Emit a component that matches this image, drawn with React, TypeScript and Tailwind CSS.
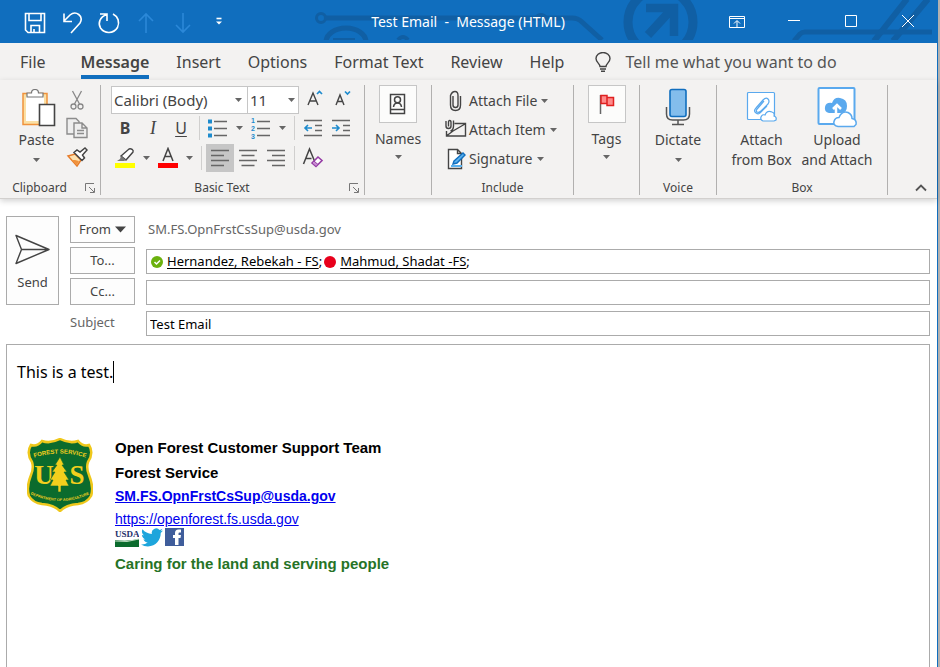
import React from "react";
import type { ReactNode } from "react";

const INK = "#444444";
const BLUE = "#1e8bcd";

function Caret({ className = "" }: { className?: string }) {
  return (
    <svg width="7" height="4" viewBox="0 0 7 4" className={"shrink-0 " + className} aria-hidden="true">
      <path d="M0 0h7L3.5 4z" fill="#666" />
    </svg>
  );
}

function TitleArt() {
  return (
    <svg className="absolute right-0 top-0" width="640" height="40" viewBox="297 0 640 40" fill="none" stroke="#105fa4" aria-hidden="true">
      <circle cx="321" cy="18" r="4.500" strokeWidth="3" />
      <path d="M326 18h246q6 0 10 4l20 18" strokeWidth="5" />
      <path d="M535 18q6-7 12 0" strokeWidth="3" />
      <path d="M326 42a20 14 0 0 1 40 0" strokeWidth="5" />
      <path d="M333 39.500h22" strokeWidth="3" />
      <path d="M398 40q5-6 10 0" strokeWidth="4" />
      <circle cx="660.500" cy="22" r="32.500" strokeWidth="9" />
      <path d="M646 8h28v28M671 10l-23 25" strokeWidth="8.500" />
      <path d="M794 41l6-7q2-2 5-2h127" strokeWidth="5" />
      <path d="M874 41l33-42M893 41l35-42" strokeWidth="6" />
    </svg>
  );
}

function QuickButton({ label, children }: { label: string; children: ReactNode }) {
  return (
    <button aria-label={label} className="flex h-full w-[37px] items-center justify-center">
      <svg width="24" height="24" viewBox="0 0 24 24" fill="none" stroke="white" strokeWidth="1.6">{children}</svg>
    </button>
  );
}

function WindowButton({ label, children }: { label: string; children: ReactNode }) {
  return (
    <button aria-label={label} className="flex h-full w-[57px] items-center justify-center">
      <svg width="16" height="16" viewBox="0 0 16 16" fill="none" stroke="white" strokeWidth="1">{children}</svg>
    </button>
  );
}

function TitleBar() {
  return (
    <header className="relative flex h-[43px] items-center justify-between bg-[#106ebe]">
      <TitleArt />
      <div className="relative h-full flex-1">
        <div className="flex h-full items-center pl-4 pt-0.5">
          <QuickButton label="Save">
            <path d="M2.500 2.500h19v19H5l-2.500-2.500zM6 2.500v7h12v-7M8 21.500v-7h8.500v7M11 21v-3" />
          </QuickButton>
          <QuickButton label="Undo">
            <path d="M4 2.500v8h8M4 10l6-6c6-5 14 1 10 8l-9 10" />
          </QuickButton>
          <QuickButton label="Redo">
            <path d="M3 3h7v7M9.500 3.500C3 6 .500 12 3.500 17c4 6 13 6 17-.500C23 11 21 5.500 16 3" />
          </QuickButton>
          <QuickButton label="Previous item">
            <path d="M12 22V3M5 10l7-7 7 7" stroke="#2b88d8" />
          </QuickButton>
          <QuickButton label="Next item">
            <path d="M12 2v19M5 14l7 7 7-7" stroke="#2b88d8" />
          </QuickButton>
          <QuickButton label="Customize quick access toolbar">
            <path d="M8.500 7.500h5" />
            <path d="M8 10.500h6l-3 3z" fill="white" stroke="none" />
          </QuickButton>
        </div>
      </div>
      <h1 className="relative whitespace-pre text-[14px] text-white">Test Email  -  Message (HTML)</h1>
      <div className="relative flex h-full flex-1 items-center justify-end pr-px">
        <WindowButton label="Ribbon display options">
          <path d="M.500 2.500h15v11H.500zM.500 4.500h15M8 13V7M5 9.500L8 6.500l3 3" />
        </WindowButton>
        <WindowButton label="Minimize"><path d="M2 6.500h12" /></WindowButton>
        <WindowButton label="Maximize"><path d="M2.500 1.500h11v11h-11z" /></WindowButton>
        <WindowButton label="Close"><path d="M2 1l12 12M14 1L2 13" /></WindowButton>
      </div>
    </header>
  );
}

function Tabs() {
  const tabs = ["Insert", "Options", "Format Text", "Review", "Help"];
  return (
    <nav className="flex h-[37px] items-start gap-[27px] pl-5 text-[16px] leading-[38px] text-[#444]">
      <button className="mr-2">File</button>
      <button className="h-9 border-b-4 border-[#106ebe] font-semibold leading-[38px]">Message</button>
      {tabs.map((t) => (
        <button key={t} className="whitespace-nowrap">{t}</button>
      ))}
      <label className="flex flex-1 items-center gap-3.5 pl-1">
        <svg width="16" height="20" viewBox="0 0 16 20" fill="none" stroke={INK} strokeWidth="1.400" className="shrink-0">
          <path d="M5 14.500c0-3-4-4-4-8a7 6 0 0 1 14 0c0 4-4 5-4 8zM5 17h6M6 19.300h4" />
        </svg>
        <input aria-label="Tell me what you want to do" placeholder="Tell me what you want to do" className="min-w-0 flex-1 bg-transparent outline-none placeholder:text-[#555]" />
      </label>
    </nav>
  );
}

function Group({ label, launcher, className, children }: { label?: string; launcher?: boolean; className: string; children: ReactNode }) {
  return (
    <section className={"flex h-[110px] shrink-0 flex-col border-r border-[#b1b0af] " + className}>
      <div className="flex-1">{children}</div>
      <div className="flex h-3.5 items-center text-[12px] leading-[14px] text-[#444]">
        <span className={launcher ? "flex-1 pr-1.5 text-center" : "flex-1 text-center"}>{label}</span>
        {launcher && (
          <button aria-label={label + " settings"} className="mr-1">
            <svg width="11" height="11" viewBox="0 0 11 11" fill="none" stroke="#777"><path d="M.500 8V.500H9M4 4l5 5M9.500 5v4.500H5" /></svg>
          </button>
        )}
      </div>
    </section>
  );
}

function Tool({ label, active, children }: { label: string; active?: boolean; children: ReactNode }) {
  return (
    <button aria-label={label} className={active ? "flex h-7 w-7 items-center justify-center bg-[#c6c6c6]" : "flex h-7 w-7 items-center justify-center"}>
      {children}
    </button>
  );
}

function Drop({ label }: { label: string }) {
  return (
    <button aria-label={label} className="flex h-7 w-[15px] items-center justify-center"><Caret /></button>
  );
}

function Lines({ d, children }: { d: string; children?: ReactNode }) {
  return (
    <svg width="20" height="20" viewBox="0 0 20 20" fill="none" className="overflow-visible">
      <path d={d} stroke="#666" strokeWidth="1.500" />
      {children}
    </svg>
  );
}

function Divider() {
  return <div className="mx-1 h-6 w-px bg-[#d0cfce]" />;
}

function ClipboardGroup() {
  return (
    <Group label="Clipboard" launcher className="w-[101px]">
      <div className="flex">
        <button className="flex w-[63px] flex-col items-center pl-2.5 pt-1">
          <svg width="36" height="40" viewBox="0 0 36 40" className="ml-1">
            <path d="M2 4.500h24v31H2z" fill="#fbe0a5" stroke="#f0923c" strokeWidth="1.500" />
            <path d="M5 7h18v25H5z" fill="#fff" />
            <path d="M6 8V4h4.500a3.500 3.500 0 0 1 7 0H22v4z" fill="#fff" stroke="#777" strokeWidth="1.200" />
            <path d="M18.500 15.500h15v21h-15z" fill="#fff" stroke="#444" strokeWidth="1.600" />
          </svg>
          <span className="mt-px text-[14px] leading-5">Paste</span>
          <Caret className="mt-2" />
        </button>
        <div className="flex flex-col pt-px">
          <Tool label="Cut">
            <svg width="14" height="22" viewBox="0 0 14 22" fill="none" stroke="#888" strokeWidth="1.300">
              <path d="M2.500 2l7 13M11.500 2l-7 13" /><circle cx="3.500" cy="17.500" r="2.500" /><circle cx="10.500" cy="17.500" r="2.500" />
            </svg>
          </Tool>
          <Tool label="Copy">
            <svg width="22" height="22" viewBox="0 0 22 22" fill="#eee" stroke="#8c8c8c" strokeWidth="1.400">
              <path d="M1 1.500h9l3 3V17H1z" />
              <path d="M8 6h8l5 5v9.500H8zM16 6v5h5M11 13.500h7M11 16.500h7" />
            </svg>
          </Tool>
          <Tool label="Format Painter">
            <svg width="22" height="22" viewBox="0 0 22 22" fill="none">
              <path d="M2 11l7-2 6 6-4 6z" fill="#fde2b0" stroke="#e77d2b" strokeWidth="1.500" />
              <path d="M5 15l6 5 2-4-4-1z" fill="#f0923c" />
              <path d="M8 7.500l8 8 2.500-2.500-2-3L21 5l-2-2-5 4-3-2z" fill="#fff" stroke={INK} strokeWidth="1.500" />
            </svg>
          </Tool>
        </div>
      </div>
    </Group>
  );
}

function BasicTextGroup() {
  return (
    <Group label="Basic Text" launcher className="w-[264px]">
      <div className="pl-2.5 pt-px">
        <div className="flex h-7 items-center">
          <div className="relative">
            <select aria-label="Font" className="block h-7 w-[137px] appearance-none border border-[#c6c6c6] bg-white pl-0.5 text-[15px] text-[#444]"><option>Calibri (Body)</option></select>
            <Caret className="pointer-events-none absolute right-1.5 top-3" />
          </div>
          <div className="relative -ml-px">
            <select aria-label="Font size" className="block h-7 w-[52px] appearance-none border border-[#c6c6c6] bg-white pl-0.5 text-[15px] text-[#444]"><option>11</option></select>
            <Caret className="pointer-events-none absolute right-1 top-3" />
          </div>
          <Tool label="Increase font size">
            <svg width="20" height="20" viewBox="0 0 20 20" fill="none"><path d="M5 15L10 3l5 12M7 11h6.500" stroke={INK} strokeWidth="1.400" /><path d="M14 4l2.500-2.500L19 4" stroke={BLUE} strokeWidth="1.700" /></svg>
          </Tool>
          <Tool label="Decrease font size">
            <svg width="20" height="20" viewBox="0 0 20 20" fill="none"><path d="M5 15L9 5l4 10M6.500 11.500h5" stroke={INK} strokeWidth="1.400" /><path d="M14 1.500L16.500 4 19 1.500" stroke={BLUE} strokeWidth="1.700" /></svg>
          </Tool>
        </div>
        <div className="flex h-7 items-center">
          <Tool label="Bold"><span className="text-[16px] font-bold">B</span></Tool>
          <Tool label="Italic"><span className="font-[Liberation_Serif,serif] text-[18px] italic">I</span></Tool>
          <Tool label="Underline"><span className="text-[16px] underline underline-offset-2">U</span></Tool>
          <Divider />
          <Tool label="Bullets">
            <Lines d="M6 3.500h13M6 10.500h13M6 17.500h13"><path d="M0 1.500h4v4H0zM0 8.500h4v4H0zM0 15.500h4v4H0z" fill={BLUE} /></Lines>
          </Tool>
          <Drop label="Bullet styles" />
          <Tool label="Numbering">
            <Lines d="M6 3.500h13M6 10.500h13M6 17.500h13">
              <g fill={BLUE} fontSize="7" fontWeight="700" fontFamily="Liberation Sans, sans-serif"><text x="0" y="5">1</text><text x="0" y="13">2</text><text x="0" y="21">3</text></g>
            </Lines>
          </Tool>
          <Drop label="Numbering styles" />
          <Divider />
          <Tool label="Decrease indent"><Lines d="M1 2.500h18M12 7.500h7M12 12.500h7M1 17.500h18"><path d="M9 10H2M5 7l-3 3 3 3" stroke={BLUE} strokeWidth="1.600" /></Lines></Tool>
          <Tool label="Increase indent"><Lines d="M1 2.500h18M12 7.500h7M12 12.500h7M1 17.500h18"><path d="M1 10h7M5 7l3 3-3 3" stroke={BLUE} strokeWidth="1.600" /></Lines></Tool>
        </div>
        <div className="mt-0.5 flex h-7 items-center">
          <Tool label="Highlight">
            <svg width="20" height="22" viewBox="0 0 20 22" fill="none"><path d="M0 16h20v5H0z" fill="#ff0" /><path d="M6 9l8-7c2-1 5 1 4 3l-7 8z" fill="#fff" stroke={INK} strokeWidth="1.400" /><path d="M6 9l5 4-2 1H2l3-2z" fill="#777" /></svg>
          </Tool>
          <Drop label="Highlight colors" />
          <Tool label="Font color">
            <svg width="20" height="22" viewBox="0 0 20 22" fill="none"><path d="M0 16h20v5H0z" fill="#f00" /><path d="M5 14L10 1.500 15 14M6.500 9.500h7" stroke={INK} strokeWidth="1.500" /></svg>
          </Tool>
          <Drop label="Font colors" />
          <Divider />
          <Tool label="Align left" active><Lines d="M1 2.500h18M1 7.500h13M1 12.500h18M1 17.500h13" /></Tool>
          <Tool label="Center"><Lines d="M1 2.500h18M3.500 7.500h13M1 12.500h18M3.500 17.500h13" /></Tool>
          <Tool label="Align right"><Lines d="M1 2.500h18M6 7.500h13M1 12.500h18M6 17.500h13" /></Tool>
          <Divider />
          <Tool label="Clear formatting">
            <svg width="22" height="22" viewBox="0 0 22 22" fill="none"><path d="M1.500 17L7.500 2l5 12M3.500 11.500h6" stroke={INK} strokeWidth="1.500" /><path d="M10 16l6-6 4 3.500-6 6z" fill="#fff" stroke="#953da5" strokeWidth="1.600" /><path d="M10 16l2-2 4 3.500-2 2z" fill="#c98fd3" stroke="#953da5" /></svg>
          </Tool>
        </div>
      </div>
    </Group>
  );
}

function BoxedButton({ label, children }: { label: string; children: ReactNode }) {
  return (
    <button className="flex w-full flex-col items-center">
      <span className="flex h-[38px] w-[38px] items-center justify-center border border-[#c6c6c6] bg-[#fcfcfb]">{children}</span>
      <span className="mt-1 text-[14px] leading-6">{label}</span>
      <Caret className="mt-1" />
    </button>
  );
}

function IncludeButton({ label, children }: { label: string; children: ReactNode }) {
  return (
    <button className="flex h-[29px] items-center gap-0.5 whitespace-nowrap text-[14px]">
      <svg width="22" height="22" viewBox="0 0 22 22" fill="none" stroke={INK} strokeWidth="1.400">{children}</svg>
      {label}
      <Caret className="ml-0.5" />
    </button>
  );
}

function TallButton({ icon, children, className = "" }: { icon: ReactNode; children: ReactNode; className?: string }) {
  return (
    <button className={"flex flex-col items-center text-[14px] leading-5 " + className}>
      <span className="flex h-11 items-center">{icon}</span>
      {children}
    </button>
  );
}

function Ribbon() {
  return (
    <div className="flex h-[119px] border-b border-[#d2d0ce] pt-[5px] text-[#444] shadow-[0_2px_6px_rgba(0,0,0,0.18)]">
      <ClipboardGroup />
      <BasicTextGroup />
      <Group className="w-[67px]">
        <BoxedButton label="Names">
          <svg width="18" height="22" viewBox="0 0 18 22" fill="none" stroke={INK} strokeWidth="1.500">
            <path d="M1.500 1.500h14v19h-14zM1.500 16.500h14M4.500 14q.500-4 4-4t4 4" /><circle cx="8.500" cy="6.800" r="3" />
          </svg>
        </BoxedButton>
      </Group>
      <Group label="Include" className="w-[142px]">
        <div className="pl-[13px] pt-px">
          <IncludeButton label="Attach File">
            <path d="M8 6v9q0 2.500 2.500 2.500T13 15V5.500q0-4-3-4t-4.500 4V15q0 5.500 5 5.500t5-5.500V6" />
          </IncludeButton>
          <IncludeButton label="Attach Item">
            <path d="M9.500 4.500H20.500V17H1.500v-5M2 16.500l6-4.500 12-7M1 2v5q0 2.500 2.500 2.500T6 7V3.500Q6 1.500 4.700 1.500T3.500 3.500v4M8.500 1.500V7q0 4-3 5" />
          </IncludeButton>
          <IncludeButton label="Signature">
            <path d="M3.500 1.500h9l4 4v15h-13zM12.500 1.500v4h4" fill="#fff" />
            <path d="M6 18h11" stroke="#5ab1ef" strokeWidth="2" />
            <path d="M9 13l9-8 2 2-8 8-4 1z" fill="#5ab1ef" stroke="#106ebe" />
          </IncludeButton>
        </div>
      </Group>
      <Group className="w-[66px]">
        <BoxedButton label="Tags">
          <svg width="18" height="22" viewBox="0 0 18 22" fill="none"><path d="M2.500 2v19" stroke="#666" strokeWidth="1.500" /><path d="M3 2.500h6v8H3zM9 4.500h6.500v8H9z" fill="#ff8a8a" stroke="#e02020" strokeWidth="1.500" /></svg>
        </BoxedButton>
      </Group>
      <Group label="Voice" className="w-[77px]">
        <TallButton
          className="w-full"
          icon={
            <svg width="26" height="38" viewBox="0 0 26 38" fill="none"><path d="M1.500 19v7q0 6 6 6h11q6 0 6-6v-7M13 32v4M7 36.500h12" stroke="#555" strokeWidth="1.500" /><rect x="5" y="1.500" width="16" height="27" rx="2" fill="#83bdec" stroke="#106ebe" strokeWidth="1.600" /></svg>
          }
        >
          <span className="mt-px">Dictate</span>
          <Caret className="mt-2" />
        </TallButton>
      </Group>
      <Group label="Box" className="w-[171px]">
        <div className="flex">
          <TallButton
            className="w-[89px]"
            icon={
              <svg width="32" height="32" viewBox="0 0 32 32" fill="none" stroke="#5aa9ee" strokeWidth="1.200">
                <rect x="1.500" y="1.500" width="27" height="27" rx="1" fill="#fff" />
                <path d="M10 17l7-8q3-3 5-1t0 5l-7 7q-2 2-4 1t1-4l6-7M10 17q-3 3 0 5t5-1l6-6" />
                <path d="M17 30q-3-1-2-4t4-2q2-5 7-3 3 1 2 4 3 1 2 4l-2 1z" fill="#fff" />
              </svg>
            }
          >
            <span className="mt-px">Attach</span>
            <span className="whitespace-nowrap">from Box</span>
          </TallButton>
          <TallButton
            className="w-[62px]"
            icon={
              <svg width="40" height="42" viewBox="0 0 40 42" fill="none" stroke="#5aa9ee">
                <rect x="1.500" y="2" width="36" height="36" rx="1" fill="#fff" strokeWidth="2" />
                <path d="M12 27q-5-1-4-6t7-4q2-6 8-5 7 1 7 8t-6 7z" fill="#5aa9ee" stroke="none" />
                <path d="M19 28v-8M16 23l4-4 4 4" stroke="#fff" strokeWidth="2.500" />
                <path d="M21 40.500q-5-1-4-5t5-4q3-7 9-5 4 2 4 6 5 1 4 6l-2 2z" fill="#fff" strokeWidth="1.500" />
              </svg>
            }
          >
            <span className="mt-px">Upload</span>
            <span className="whitespace-nowrap">and Attach</span>
          </TallButton>
        </div>
      </Group>
      <div className="flex flex-1 items-end justify-center pb-1.5 pl-4">
        <button aria-label="Collapse the ribbon">
          <svg width="12" height="8" viewBox="0 0 12 8" fill="none" stroke="#555" strokeWidth="1.800"><path d="M1 6.500l5-5 5 5" /></svg>
        </button>
      </div>
    </div>
  );
}

const fieldBox = "h-[25px] w-full self-end border border-[#ababab] bg-white";
const headButton = "border border-[#ababab] bg-[#fdfdfd] text-[#444]";

function MessageHeader() {
  return (
    <div className="flex gap-[11px] pl-1.5 pr-[7px] pt-[17px] text-[13px]">
      <button className={"flex h-[89px] w-[53px] flex-col items-center self-start pt-[17px] " + headButton}>
        <svg width="36" height="32" viewBox="0 0 36 32" fill="none" stroke={INK} strokeWidth="1.400"><path d="M1 1.500L34 15.500 1 29.500 6.500 15.500zM6.500 15.500h27" strokeLinejoin="round" /></svg>
        <span className="mt-1.5 leading-5">Send</span>
      </button>
      <div className="grid flex-1 auto-rows-[27px] grid-cols-[65px_1fr] gap-x-[11px] gap-y-1">
        <button className={"flex items-center justify-center gap-1 " + headButton}>
          From
          <svg width="11" height="7" viewBox="0 0 11 7"><path d="M0 .500h11L5.500 6.500z" fill={INK} /></svg>
        </button>
        <span className="self-center pl-0.5 text-[#666]">SM.FS.OpnFrstCsSup@usda.gov</span>
        <button className={headButton}>To...</button>
        <div role="textbox" aria-label="To" className={"flex items-center pl-1 text-black " + fieldBox}>
          <svg width="12" height="12" viewBox="0 0 12 12" className="mr-1"><circle cx="6" cy="6" r="6" fill="#6bb10e" /><path d="M3.500 6l2 2 3.500-3.500" fill="none" stroke="#fff" strokeWidth="1.500" /></svg>
          <a href="#rebekah" className="underline underline-offset-2">Hernandez, Rebekah - FS</a>;
          <svg width="12" height="12" viewBox="0 0 12 12" className="ml-0.5 mr-1"><circle cx="6" cy="6" r="6" fill="#e8001c" /></svg>
          <a href="#shadat" className="underline underline-offset-2">Mahmud, Shadat -FS</a>;
        </div>
        <button className={headButton}>Cc...</button>
        <input aria-label="Cc" className={"px-1 " + fieldBox} />
        <label htmlFor="subject" className="self-center text-[#666]">Subject</label>
        <input id="subject" defaultValue="Test Email" className={"px-[3px] text-black " + fieldBox} />
      </div>
    </div>
  );
}

function Shield() {
  return (
    <svg width="66" height="74" viewBox="0 0 66 74" role="img" aria-label="Forest Service, Department of Agriculture">
      <path d="M4 7q6 2 11-4 8 3 18-2 10 5 18 2 5 6 11 4 5 8-1 17-2 6 1 13 5 12 2 21-4 7-13 8-12 1-18 7-6-6-18-7-9-1-13-8-3-9 2-21 3-7 1-13Q-1 15 4 7z" fill="#0b6b2d" stroke="#efc81b" strokeWidth="2.500" />
      <path id="shieldTop" d="M6 20q27-9 54 0" fill="none" />
      <path id="shieldBase" d="M3 56q30 14 60 0" fill="none" />
      <g fill="#f3cf1d" textAnchor="middle" fontFamily="Liberation Sans, sans-serif" fontWeight="700">
        <text fontSize="6"><textPath href="#shieldTop" startOffset="50%">FOREST SERVICE</textPath></text>
        <text fontSize="3.800"><textPath href="#shieldBase" startOffset="50%">DEPARTMENT OF AGRICULTURE</textPath></text>
        <g fontFamily="Liberation Serif, serif" fontSize="27"><text x="17" y="46">U</text><text x="50" y="46">S</text></g>
      </g>
      <path d="M33 19l4 8h-2l5 7h-3l5 8h-3l3 6h-8v6h-3v-6h-8l3-6h-3l5-8h-3l5-7h-2z" fill="#f3cf1d" stroke="#0b6b2d" strokeWidth=".6" />
    </svg>
  );
}

function Signature() {
  return (
    <div className="mt-[51px] flex items-start gap-[22px] pl-2.5 font-[Liberation_Sans,Arial,sans-serif] text-[15px] text-black">
      <div className="mt-1"><Shield /></div>
      <div className="flex flex-col items-start">
        <p className="font-bold leading-7">Open Forest Customer Support Team</p>
        <p className="font-bold leading-[22px]">Forest Service</p>
        <a href="mailto:SM.FS.OpnFrstCsSup@usda.gov" className="text-[14px] font-bold leading-6 text-[#0000ee] underline">SM.FS.OpnFrstCsSup@usda.gov</a>
        <a href="https://openforest.fs.usda.gov" className="text-[14px] leading-[22px] text-[#0000ee] underline">https://openforest.fs.usda.gov</a>
        <div className="-mt-0.5 flex h-5 items-start gap-0.5">
          <svg width="24" height="19" viewBox="0 0 24 19" role="img" aria-label="USDA">
            <text x="0" y="9" fontSize="9" fontWeight="700" fontFamily="Liberation Serif, serif" fill="#25306b">USDA</text>
            <path d="M0 12q12 2 24-1v8H0z" fill="#0b6b2d" /><path d="M0 13q12 2 24-2" stroke="#b9d9bd" fill="none" />
          </svg>
          <svg width="22" height="19" viewBox="0 0 24 20" role="img" aria-label="Twitter">
            <path d="M24 2.400c-.9.400-1.800.700-2.800.8 1-.6 1.800-1.600 2.200-2.700-1 .6-2 1-3.100 1.200A4.900 4.900 0 0 0 11.900 6.200C7.700 6 4.100 4 1.700 1 .400 3.200 1 6.100 3.200 7.600c-.8 0-1.600-.2-2.200-.6 0 2.300 1.600 4.400 3.900 4.900-.7.200-1.500.200-2.200.1.600 2 2.400 3.400 4.600 3.400A9.900 9.900 0 0 1 0 17.500 14 14 0 0 0 7.500 19.700c9.100 0 14.300-7.700 14-14.600 1-.7 1.800-1.600 2.500-2.700z" fill="#1da5dc" />
          </svg>
          <svg width="19" height="18" viewBox="0 0 19 18" role="img" aria-label="Facebook">
            <path d="M0 0h19v18H0z" fill="#3f5d9b" /><path d="M10 17V10H8V7h2V5q0-3.500 3.500-3.500H16v3h-1.500Q13.500 4.500 13.500 5.500V7H16l-.500 3h-2v7z" fill="#fff" />
          </svg>
        </div>
        <p className="font-bold leading-8 text-[#267326]">Caring for the land and serving people</p>
      </div>
    </div>
  );
}

export default function App() {
  return (
    <div className="flex min-h-screen overflow-hidden bg-[#b3b1af] pr-0.5 font-[Noto_Sans,sans-serif]">
      <div className="flex min-w-0 flex-1 flex-col border-r border-[#106ebe] bg-white">
        <TitleBar />
        <div className="bg-[#f3f2f1]">
          <Tabs />
          <Ribbon />
        </div>
        <MessageHeader />
        <main role="textbox" aria-label="Message body" className="ml-1.5 mr-[7px] mt-2 flex-1 border border-b-0 border-[#ababab] pl-2.5 pt-4">
          <p className="flex items-center text-[16px] leading-[22px] text-black">
            This is a test.
            <span className="h-[22px] w-px bg-black" />
          </p>
          <Signature />
        </main>
      </div>
    </div>
  );
}
